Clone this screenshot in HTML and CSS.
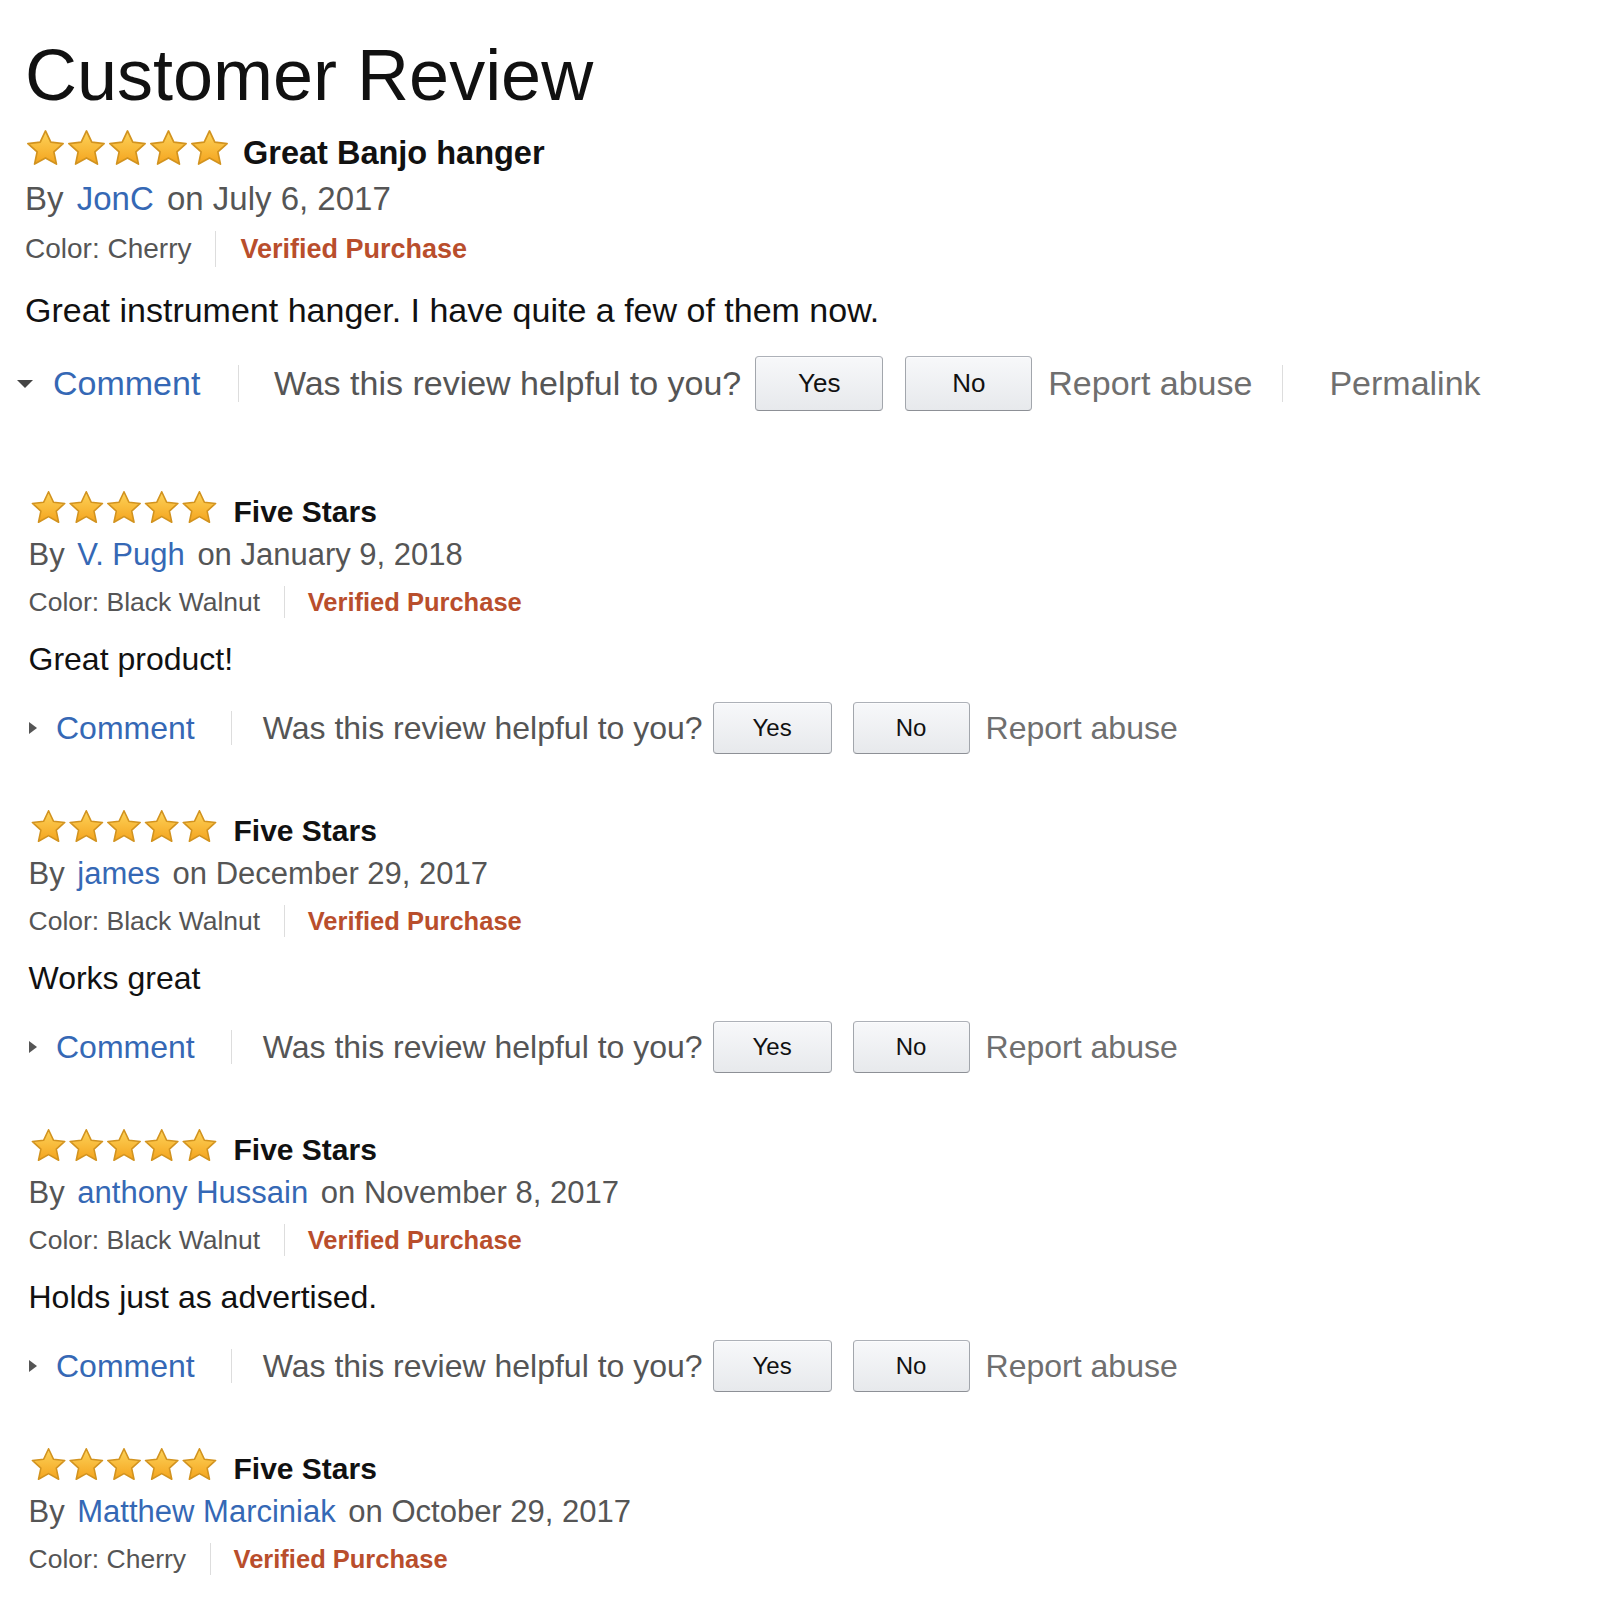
FILE: index.html
```html
<!DOCTYPE html>
<html lang="en">
<head>
  <meta charset="UTF-8" />
  <meta name="viewport" content="width=device-width, initial-scale=1.0" />
  <title>Customer Review</title>
  <link rel="stylesheet" href="styles.css">
</head>
<body>

<svg class="svg-defs" width="0" height="0" aria-hidden="true">
  <defs>
    <linearGradient id="star-fill" x1="0" y1="0" x2="0" y2="1">
      <stop offset="0" stop-color="#fdd35a" />
      <stop offset="1" stop-color="#f4a41e" />
    </linearGradient>
    <symbol id="star" viewBox="0 0 24 24">
      <path d="M12 1.5l3.1 6.6 7.2.8-5.4 4.9 1.5 7.1L12 17.3l-6.4 3.6 1.5-7.1-5.4-4.9 7.2-.8z" fill="url(#star-fill)" stroke="#d2931f" stroke-width="1" stroke-linejoin="round" />
    </symbol>
  </defs>
</svg>

<main class="reviews">
  <h1 class="page-title">Customer Review</h1>

  <div class="review review-lead">
    <div class="review-head">
      <svg class="stars" viewBox="0 1 120 21"><use href="#star" x="0" width="24" height="24" /><use href="#star" x="24" width="24" height="24" /><use href="#star" x="48" width="24" height="24" /><use href="#star" x="72" width="24" height="24" /><use href="#star" x="96" width="24" height="24" /></svg><span class="review-title">Great Banjo hanger</span>
    </div>
    <div class="byline">By <a class="author" href="#">JonC</a> on July 6, 2017</div>
    <div class="review-meta">
      <span class="variant">Color: Cherry</span>
      <span class="meta-sep"></span>
      <span class="verified">Verified Purchase</span>
    </div>
    <p class="review-body">Great instrument hanger. I have quite a few of them now.</p>
    <div class="review-actions">
      <a class="comment-toggle open" href="#">Comment</a>
      <span class="sep"></span>
      <span class="helpful">Was this review helpful to you?</span>
      <button class="vote">Yes</button>
      <button class="vote vote-no">No</button>
      <a class="report" href="#">Report abuse</a>
      <span class="sep sep-link"></span>
      <a class="permalink" href="#">Permalink</a>
    </div>
  </div>

  <div class="review">
    <div class="review-head">
      <svg class="stars" viewBox="0 1 120 21"><use href="#star" x="0" width="24" height="24" /><use href="#star" x="24" width="24" height="24" /><use href="#star" x="48" width="24" height="24" /><use href="#star" x="72" width="24" height="24" /><use href="#star" x="96" width="24" height="24" /></svg><span class="review-title">Five Stars</span>
    </div>
    <div class="byline">By <a class="author" href="#">V. Pugh</a> on January 9, 2018</div>
    <div class="review-meta">
      <span class="variant">Color: Black Walnut</span>
      <span class="meta-sep"></span>
      <span class="verified">Verified Purchase</span>
    </div>
    <p class="review-body">Great product!</p>
    <div class="review-actions">
      <a class="comment-toggle" href="#">Comment</a>
      <span class="sep"></span>
      <span class="helpful">Was this review helpful to you?</span>
      <button class="vote">Yes</button>
      <button class="vote vote-no">No</button>
      <a class="report" href="#">Report abuse</a>
    </div>
  </div>

  <div class="review">
    <div class="review-head">
      <svg class="stars" viewBox="0 1 120 21"><use href="#star" x="0" width="24" height="24" /><use href="#star" x="24" width="24" height="24" /><use href="#star" x="48" width="24" height="24" /><use href="#star" x="72" width="24" height="24" /><use href="#star" x="96" width="24" height="24" /></svg><span class="review-title">Five Stars</span>
    </div>
    <div class="byline">By <a class="author" href="#">james</a> on December 29, 2017</div>
    <div class="review-meta">
      <span class="variant">Color: Black Walnut</span>
      <span class="meta-sep"></span>
      <span class="verified">Verified Purchase</span>
    </div>
    <p class="review-body">Works great</p>
    <div class="review-actions">
      <a class="comment-toggle" href="#">Comment</a>
      <span class="sep"></span>
      <span class="helpful">Was this review helpful to you?</span>
      <button class="vote">Yes</button>
      <button class="vote vote-no">No</button>
      <a class="report" href="#">Report abuse</a>
    </div>
  </div>

  <div class="review">
    <div class="review-head">
      <svg class="stars" viewBox="0 1 120 21"><use href="#star" x="0" width="24" height="24" /><use href="#star" x="24" width="24" height="24" /><use href="#star" x="48" width="24" height="24" /><use href="#star" x="72" width="24" height="24" /><use href="#star" x="96" width="24" height="24" /></svg><span class="review-title">Five Stars</span>
    </div>
    <div class="byline">By <a class="author" href="#">anthony Hussain</a> on November 8, 2017</div>
    <div class="review-meta">
      <span class="variant">Color: Black Walnut</span>
      <span class="meta-sep"></span>
      <span class="verified">Verified Purchase</span>
    </div>
    <p class="review-body">Holds just as advertised.</p>
    <div class="review-actions">
      <a class="comment-toggle" href="#">Comment</a>
      <span class="sep"></span>
      <span class="helpful">Was this review helpful to you?</span>
      <button class="vote">Yes</button>
      <button class="vote vote-no">No</button>
      <a class="report" href="#">Report abuse</a>
    </div>
  </div>

  <div class="review">
    <div class="review-head">
      <svg class="stars" viewBox="0 1 120 21"><use href="#star" x="0" width="24" height="24" /><use href="#star" x="24" width="24" height="24" /><use href="#star" x="48" width="24" height="24" /><use href="#star" x="72" width="24" height="24" /><use href="#star" x="96" width="24" height="24" /></svg><span class="review-title">Five Stars</span>
    </div>
    <div class="byline">By <a class="author" href="#">Matthew Marciniak</a> on October 29, 2017</div>
    <div class="review-meta">
      <span class="variant">Color: Cherry</span>
      <span class="meta-sep"></span>
      <span class="verified">Verified Purchase</span>
    </div>
    <p class="review-body">Nice looking hanger, holds it well.</p>
  </div>
</main>

</body>
</html>
```

FILE: styles.css
```css
body {
  margin: 0;
  background-color: #fff;
  color: #111;
  font-family: "Liberation Sans", Arial, sans-serif;
}
a {
  color: #3568b5;
  text-decoration: none;
}
.svg-defs {
  display: block;
  width: 0;
  height: 0;
  overflow: hidden;
}
.reviews {padding: 35px 0 0 25px;}
.page-title {
  margin: 0;
  font-size: 72px;
  line-height: 80px;
  font-weight: 400;
}

.review {
  margin-top: 56px;
  padding-left: 3.5px;
}
.review-head {
  font-size: 30px;
  line-height: 40px;
}
.stars {
  width: 190px;
  height: 33px;
  margin-right: 15px;
  vertical-align: -2px;
}
.review-title {font-weight: 700;}
.byline {
  font-size: 31px;
  line-height: 46px;
  color: #555;
}
.author {margin: 0 4px;}
.review-meta {
  display: flex;
  align-items: center;
  height: 40px;
  margin-top: 4px;
  font-size: 26.5px;
}
.variant {color: #555;}
.meta-sep {
  width: 1px;
  height: 32px;
  margin: 0 22.5px 0 24px;
  background-color: #ddd;
}
.verified {
  color: #b94e2c;
  font-weight: 700;
  font-size: 25.5px;
}
.review-body {
  margin: 15px 0 0;
  font-size: 32px;
  line-height: 44px;
}
.review-actions {
  display: flex;
  align-items: center;
  height: 52px;
  margin-top: 21px;
  font-size: 32px;
  color: #555;
}
.comment-toggle {
  display: flex;
  align-items: center;
}
.comment-toggle::before {
  content: "";
  width: 0;
  height: 0;
  margin-right: 19.5px;
  border-left: 8px solid #555;
  border-top: 6px solid transparent;
  border-bottom: 6px solid transparent;
}
.comment-toggle.open::before {
  margin-right: 20px;
  border-top: 8px solid #444;
  border-left: 8px solid transparent;
  border-right: 8px solid transparent;
  border-bottom: 0;
}
.sep {
  width: 1px;
  height: 34px;
  margin: 0 31px 0 36px;
  background-color: #ddd;
}
.helpful {margin-right: 10px;}
.vote {
  width: 119px;
  height: 52px;
  padding: 0;
  border: 1px solid;
  border-color: #adb1b8 #a2a6ac #8d9096;
  border-radius: 4px;
  background: linear-gradient(to bottom, #f7f8fa, #e7e9ec);
  box-shadow: 0 1px 0 rgba(255, 255, 255, 0.6) inset;
  font-family: "Liberation Sans", Arial, sans-serif;
  font-size: 24px;
  color: #111;
  cursor: pointer;
}
.vote-no {
  width: 117px;
  margin-left: 21px;
}
.report,
.permalink {color: #6f6f6f;}
.report {margin-left: 16px;}

/* the first review is shown a bit larger */
.review-lead {
  margin-top: 15px;
  padding: 0 0 24px;
}
.review-lead .review-head {
  font-size: 32.5px;
  line-height: 44px;
}
.review-lead .stars {
  width: 205px;
  height: 36px;
  margin-right: 13px;
}
.review-lead .byline {
  font-size: 33px;
  line-height: 48px;
}
.review-lead .review-meta {
  height: 44px;
  font-size: 28px;
}
.review-lead .meta-sep {
  height: 36px;
  margin: 0 24.5px 0 23.5px;
}
.review-lead .verified {font-size: 27px;}
.review-lead .review-body {
  font-size: 34px;
  line-height: 48px;
}
.review-lead .review-actions {
  height: 55px;
  margin: 22px 0 0 -8px;
  font-size: 34px;
}
.review-lead .sep {
  height: 37px;
  margin: 0 35px 0 37.5px;
}
.review-lead .sep-link {margin: 0 46px 0 30px;}
.review-lead .helpful {margin-right: 14px;}
.review-lead .vote {
  width: 128px;
  height: 55px;
  font-size: 26px;
}
.review-lead .vote-no {
  width: 127px;
  margin-left: 22px;
}
```
